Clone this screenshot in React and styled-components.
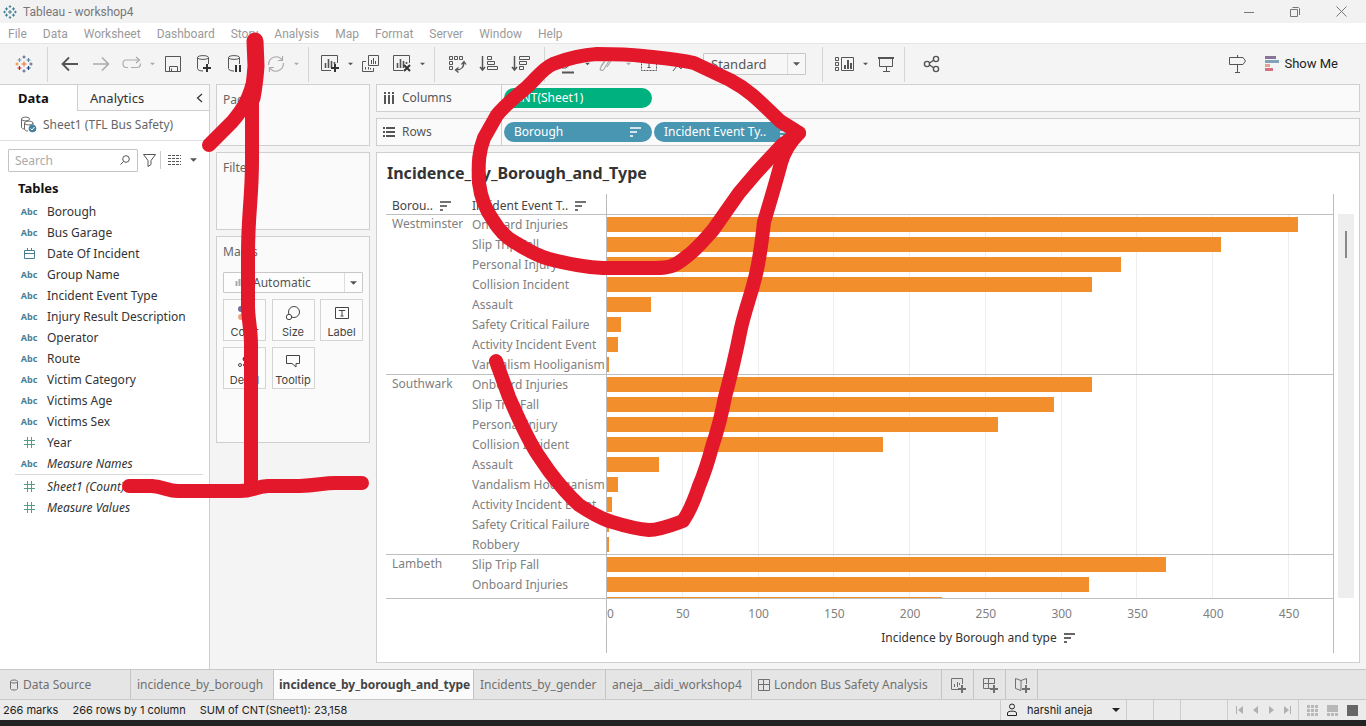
import React from "react";
import styled, { createGlobalStyle, css } from "styled-components";

const GlobalStyle = createGlobalStyle`
  *, *::before, *::after { box-sizing: border-box; }
  body {
    margin: 0;
    font-family: "Noto Sans", "Open Sans", sans-serif;
    font-size: 12px;
    line-height: 16px;
    color: #333;
    background: #f4f4f4;
  }
  button, input, select { font: inherit; color: inherit; }
  svg { display: block; flex: none; }
`;

const line = "#cfcfcf";

/* ---------- page frame ---------- */

const Page = styled.div`
  position: relative;
  display: flex;
  flex-direction: column;
  height: 100vh;
  min-height: 600px;
  overflow: hidden;
`;

const TitleBar = styled.header`
  display: flex;
  align-items: center;
  height: 23px;
  padding: 0 18px 0 3px;
  background: #f2f2f2;
  color: #777;
  font-family: Roboto, sans-serif;
`;

const AppName = styled.span`
  flex: 1;
  margin-left: 6px;
`;

const WindowButton = styled.button`
  display: grid;
  place-items: center;
  width: 14px;
  height: 22px;
  margin-left: 32px;
  padding: 0;
  border: 0;
  background: none;
  color: #777;
`;

const MenuBar = styled.nav`
  display: flex;
  align-items: center;
  gap: 16px;
  height: 20px;
  padding: 2px 8px 0;
  background: #fff;
  font-family: Roboto, sans-serif;
`;

const MenuLink = styled.a`
  color: #9a9a9a;
  text-decoration: none;
`;

const Toolbar = styled.div`
  display: flex;
  align-items: center;
  height: 41px;
  padding: 0 20px 0 8px;
  border-top: 1px solid #e6e6e6;
`;

const ToolButton = styled.button`
  display: grid;
  place-items: center;
  width: ${(p) => p.$w || 31}px;
  height: 30px;
  padding: 0;
  border: 0;
  background: none;
  color: #555;
  opacity: ${(p) => (p.$dim ? 0.45 : 1)};
`;

const Separator = styled.span`
  width: 1px;
  height: 35px;
  margin: 0 ${(p) => p.$r || 6}px 0 ${(p) => p.$l || 7}px;
  background: #d4d4d4;
`;

const ShowMe = styled.button`
  display: flex;
  align-items: center;
  gap: 5px;
  margin-left: 12px;
  padding: 0 8px 0 0;
  border: 0;
  background: none;
  color: #222;
  font-family: Roboto, sans-serif;
  font-size: 13px;
`;

const Spacer = styled.span`
  flex: 1;
`;

/* ---------- drop-downs ---------- */

const SelectBox = styled.span`
  position: relative;
  display: block;
  flex: none;
  width: ${(p) => p.$w || "100%"};
  margin-left: ${(p) => p.$ml || 0}px;
  height: ${(p) => p.$h || 22}px;
`;

const Select = styled.select`
  width: 100%;
  height: 100%;
  padding: 0 20px 0 ${(p) => p.$pl || 7}px;
  border: 1px solid #c8c8c8;
  border-radius: 1px;
  appearance: none;
  background: ${(p) => p.$bg || "#fdfdfd"};
  color: #555;
  font-size: ${(p) => p.$size || 12}px;
`;

const SelectArrow = styled.span`
  position: absolute;
  top: 1px;
  right: 1px;
  bottom: 1px;
  display: grid;
  place-items: center;
  width: 18px;
  border-left: 1px solid #ddd;
  color: #555;
  pointer-events: none;
`;

const MarkGlyph = styled.span`
  position: absolute;
  top: 6px;
  left: 12px;
  color: #aaa;
  pointer-events: none;
`;

/* ---------- workspace ---------- */

const Workspace = styled.div`
  display: flex;
  flex: 1;
  min-height: 0;
`;

const SidePane = styled.aside`
  display: flex;
  flex-direction: column;
  flex: none;
  width: 210px;
  border: 1px solid ${line};
  border-width: 1px 1px 0 0;
  background: #fff;
`;

const PaneTabs = styled.div`
  display: grid;
  grid-template-columns: 77px 1fr;
  height: 26px;
`;

const PaneTab = styled.button`
  display: flex;
  align-items: center;
  justify-content: space-between;
  padding: 0 6px 0 ${(p) => (p.$on ? 18 : 12)}px;
  border: 0 solid ${line};
  border-width: ${(p) => (p.$on ? "0" : "0 0 1px 1px")};
  background: ${(p) => (p.$on ? "#fff" : "#fafafa")};
  color: ${(p) => (p.$on ? "#111" : "#333")};
  font-size: 13px;
  font-weight: ${(p) => (p.$on ? 700 : 400)};
`;

const SourceRow = styled.div`
  display: flex;
  align-items: center;
  gap: 6px;
  height: 30px;
  padding: 0 0 2px 20px;
  border-bottom: 1px solid #e0e0e0;
  color: #666;
`;

const SearchRow = styled.div`
  display: flex;
  align-items: center;
  height: 38px;
  padding: 0 8px;
  color: #555;
`;

const SearchBox = styled.label`
  display: flex;
  align-items: center;
  width: 130px;
  height: 23px;
  padding-right: 7px;
  border: 1px solid #c4c4c4;
  border-radius: 1px;
`;

const SearchInput = styled.input`
  flex: 1;
  min-width: 0;
  padding: 2px 6px 0;
  border: 0;
  outline: 0;
  background: none;
  &::placeholder { color: #aaa; opacity: 1; }
`;

const MiniButton = styled.button`
  display: grid;
  place-items: center;
  width: ${(p) => p.$w || 22}px;
  height: 20px;
  padding: 0;
  border: 0;
  background: none;
  color: #555;
`;

const MiniRule = styled.span`
  width: 1px;
  height: 18px;
  margin-right: 2px;
  background: #ccc;
`;

const PaneTitle = styled.h2`
  margin: 0;
  padding: 0 18px 4px;
  font-size: 13px;
  line-height: 18px;
  color: #111;
`;

const FieldList = styled.ul`
  margin: 0 6px 0 15px;
  padding: 0;
  list-style: none;
  & + & {
    padding-top: 1px;
    border-top: 1px solid #d8d8d8;
  }
`;

const Field = styled.li`
  display: grid;
  grid-template-columns: 28px 1fr;
  column-gap: 4px;
  align-items: center;
  height: 21px;
  font-style: ${(p) => (p.$italic ? "italic" : "normal")};
  white-space: nowrap;
`;

const FieldIcon = styled.span`
  display: grid;
  place-items: center;
  color: ${(p) => (p.$green ? "#4f9f80" : "#4a7f93")};
  font-size: 9px;
  font-weight: 700;
  font-style: normal;
`;

const Cards = styled.section`
  display: flex;
  flex-direction: column;
  flex: none;
  gap: 6px;
  width: 154px;
  margin: 0 6px;
`;

const Card = styled.div`
  height: ${(p) => p.$h}px;
  padding: 7px 6px;
  border: 1px solid ${line};
  background: #fafafa;
`;

const CardTitle = styled.h3`
  margin: 0;
  font-size: 12px;
  font-weight: 400;
  color: #666;
`;

const MarksTools = styled.div`
  display: grid;
  grid-template-columns: repeat(3, 43px);
  justify-content: space-between;
  row-gap: 6px;
  margin-top: 6px;
`;

const MarkButton = styled.button`
  display: flex;
  flex-direction: column;
  align-items: center;
  justify-content: space-between;
  height: 42px;
  padding: 5px 0 0;
  border: 1px solid #d4d4d4;
  background: #fcfcfc;
  color: #444;
  font-family: Inter, sans-serif;
  font-size: 11px;
`;

const MarksSelectWrap = styled.div`
  margin-top: 12px;
`;

const Canvas = styled.main`
  display: flex;
  flex: 1;
  flex-direction: column;
  gap: 6px;
  min-width: 0;
  padding: 0 6px 6px 0;
`;

const Shelf = styled.div`
  display: flex;
  flex: none;
  align-items: center;
  height: 28px;
  border: 1px solid ${line};
  background: #fafafa;
`;

const ShelfLabel = styled.div`
  display: flex;
  align-items: center;
  gap: 7px;
  align-self: stretch;
  width: 125px;
  padding-left: 6px;
  border-right: 1px solid ${line};
  color: #555;
`;

const Pill = styled.button`
  display: flex;
  align-items: center;
  justify-content: space-between;
  width: 148px;
  height: 20px;
  margin-left: 2px;
  padding: 0 11px 0 10px;
  border: 0;
  border-radius: 10px;
  background: ${(p) => (p.$green ? "#00b180" : "#4996b2")};
  color: #fff;
  white-space: nowrap;
`;

/* ---------- chart ---------- */

const View = styled.section`
  display: flex;
  flex: 1;
  flex-direction: column;
  min-height: 0;
  padding: 0 5px 9px 9px;
  border: 1px solid ${line};
  background: #fff;
`;

const ViewTitle = styled.h1`
  margin: 0;
  padding: 10px 1px 11px;
  font-size: 16px;
  line-height: 20px;
  color: #333;
`;

const chartColumns = css`
  display: grid;
  grid-template-columns: 86px 134px 1fr;
`;

const ChartHeader = styled.div`
  ${chartColumns}
  flex: none;
  height: 20px;
  margin-right: 20px;
`;

const HeaderCell = styled.div`
  display: flex;
  align-items: center;
  gap: 7px;
  padding: 3px 0 0 ${(p) => p.$pl || 0}px;
  color: #444;
  white-space: nowrap;
`;

const PlotEdge = styled.div`
  border: 0 solid #bbb;
  border-width: 0 1px;
`;

const ChartScroll = styled.div`
  display: flex;
  flex: 1;
  min-height: 0;
  overflow: hidden;
`;

const ChartBody = styled.div`
  position: relative;
  flex: 1;
  min-width: 0;
  overflow: hidden;
`;

const GridLayer = styled.div`
  position: absolute;
  inset: 0 0 0 220px;
  display: grid;
  grid-template-columns: repeat(9, 50fr) 29fr;
  border: 0 solid #bbb;
  border-width: 0 1px;
`;

const GridCell = styled.span`
  border-right: 1px solid #eee;
  &:last-child { border: 0; }
`;

const Group = styled.div`
  ${chartColumns}
  position: relative;
  box-shadow: inset 0 1px 0 #bfbfbf;
`;

const GroupName = styled.div`
  padding-left: 6px;
  line-height: 20px;
  color: #808080;
`;

const RowName = styled.div`
  height: 20px;
  line-height: 22px;
  color: #808080;
  white-space: nowrap;
`;

const BarRow = styled.div`
  height: 20px;
  padding: 3px 1px 2px;
`;

const Bar = styled.div`
  height: 15px;
  background: #f28e2b;
`;

const Scrollbar = styled.div`
  flex: none;
  width: 16px;
  margin-left: 4px;
  padding: 17px 7px;
  background: #eee;
`;

const Thumb = styled.div`
  width: 2px;
  height: 27px;
  background: #888;
`;

const AxisRow = styled.div`
  display: grid;
  grid-template-columns: 220px 1fr;
  flex: none;
  height: 55px;
  margin-right: 20px;
  border-top: 1px solid #bfbfbf;
`;

const Axis = styled(PlotEdge)`
  display: flex;
  flex-direction: column;
`;

const Ticks = styled.div`
  display: grid;
  grid-template-columns: 25fr repeat(9, 50fr) 4fr;
  padding-top: 7px;
  color: #808080;
`;

const Tick = styled.span`
  min-width: 0;
  text-align: ${(p) => (p.$first ? "left" : "center")};
`;

const AxisTitle = styled.div`
  display: flex;
  align-items: center;
  justify-content: center;
  gap: 7px;
  padding: 8px 0 0 16px;
`;

/* ---------- bottom bars ---------- */

const SheetTabs = styled.div`
  display: flex;
  flex: none;
  height: 31px;
  border: 1px solid #c8c8c8;
  border-width: 1px 0;
  background: #e5e5e5;
`;

const SheetTab = styled.button`
  display: flex;
  align-items: center;
  gap: 4px;
  flex: none;
  width: ${(p) => p.$w}px;
  padding: 0 5px 0 ${(p) => p.$pl || 6}px;
  border: 0;
  border-right: 1px solid #c4c4c4;
  background: ${(p) => (p.$on ? "#fbfbfb" : "transparent")};
  color: ${(p) => (p.$on ? "#444" : "#707070")};
  font-weight: ${(p) => (p.$on ? 700 : 400)};
  white-space: nowrap;
`;

const StatusBar = styled.footer`
  display: flex;
  flex: none;
  height: 20px;
  background: #ebebeb;
  font-family: Inter, sans-serif;
  font-size: 11px;
  color: #222;
`;

const StatusText = styled.span`
  padding: 2px 11px 0 3px;
`;

const StatusCell = styled.div`
  display: flex;
  align-items: center;
  width: ${(p) => p.$w}px;
  padding: 0 ${(p) => p.$p || 0}px;
  border-left: 1px solid #ccc;
`;

const UserButton = styled.button`
  display: flex;
  align-items: center;
  gap: 10px;
  width: 100%;
  padding: 0;
  border: 0;
  background: none;
  white-space: nowrap;
`;

const StatusButton = styled.button`
  display: grid;
  place-items: center;
  width: ${(p) => p.$w}px;
  padding: 0;
  border: 0;
  background: none;
  color: ${(p) => p.$c || "#b0b0b0"};
`;

const TaskbarEdge = styled.div`
  flex: none;
  height: 6px;
  background: #222;
`;

const Ink = styled.svg`
  position: absolute;
  top: 0;
  left: 0;
  pointer-events: none;
`;

/* ---------- icons ---------- */

const Icon = ({ w = 20, h = 20, children, sw = 1 }) => (
  <svg width={w} height={h} viewBox={`0 0 ${w} ${h}`} fill="none" stroke="currentColor" strokeWidth={sw} aria-hidden="true">
    {children}
  </svg>
);

const Caret = ({ w = 7 }) => (
  <svg width={w} height="4" viewBox="0 0 8 4" fill="currentColor" aria-hidden="true">
    <path d="M0 0H8L4 4Z" />
  </svg>
);

const SortIcon = () => (
  <Icon w={11} h={10}>
    <path d="M0 1H11M0 5H7M0 9H3" strokeWidth="1.5" />
  </Icon>
);

const Cross = ({ x, y, r, c }) => (
  <path d={`M${x - r} ${y}H${x + r}M${x} ${y - r}V${y + r}`} stroke={c} />
);

const TableauLogo = ({ size = 18, mono }) => (
  <svg width={size} height={size} viewBox="0 0 18 18" fill="none" strokeWidth="1.2" aria-hidden="true">
    <Cross x={9} y={9} r={2.6} c={mono || "#e8762d"} />
    <Cross x={4.5} y={5} r={2} c={mono || "#7a9aa8"} />
    <Cross x={13.5} y={5} r={2} c={mono || "#59879b"} />
    <Cross x={4.5} y={13} r={2} c={mono || "#c72035"} />
    <Cross x={13.5} y={13} r={2} c={mono || "#1f447e"} />
    <Cross x={9} y={2} r={1.6} c={mono || "#5c6692"} />
    <Cross x={9} y={16} r={1.6} c={mono || "#5c6692"} />
    <Cross x={2} y={9} r={1.6} c={mono || "#eb912c"} />
    <Cross x={16} y={9} r={1.6} c={mono || "#5c6692"} />
  </svg>
);

const PlusBadge = ({ x, y }) => <path d={`M${x - 4} ${y}H${x + 4}M${x} ${y - 4}V${y + 4}`} stroke="#333" strokeWidth="2" />;

const Cylinder = () => (
  <path d="M3.5 3.5V14.5C3.5 16 6 17 9 17M14.5 3.5V10M3.5 3.5C3.5 1 14.5 1 14.5 3.5S3.5 6 3.5 3.5Z" />
);

const ChartBox = () => (
  <>
    <path d="M17.5 9V1.5H1.5V16.5H11" />
    <path d="M5.5 14V9M8.5 14V5M11.5 14V7M14.5 10V8" strokeWidth="1.6" />
  </>
);

const ToolCaret = ({ label, dim }) => (
  <ToolButton $w={10} $dim={dim} aria-label={label}>
    <Caret w={5} />
  </ToolButton>
);

/* ---------- data ---------- */

const menus = ["File", "Data", "Worksheet", "Dashboard", "Story", "Analysis", "Map", "Format", "Server", "Window", "Help"];

const dimensions = [
  ["abc", "Borough"],
  ["abc", "Bus Garage"],
  ["date", "Date Of Incident"],
  ["abc", "Group Name"],
  ["abc", "Incident Event Type"],
  ["abc", "Injury Result Description"],
  ["abc", "Operator"],
  ["abc", "Route"],
  ["abc", "Victim Category"],
  ["abc", "Victims Age"],
  ["abc", "Victims Sex"],
  ["num", "Year"],
  ["abc", "Measure Names", true],
];

const measures = [
  ["num", "Sheet1 (Count)", true],
  ["num", "Measure Values", true],
];

const axisMax = 479;

const groups = [
  {
    name: "Westminster",
    rows: [
      ["Onboard Injuries", 456],
      ["Slip Trip Fall", 405],
      ["Personal Injury", 339],
      ["Collision Incident", 320],
      ["Assault", 29],
      ["Safety Critical Failure", 9],
      ["Activity Incident Event", 7],
      ["Vandalism Hooliganism", 1],
    ],
  },
  {
    name: "Southwark",
    rows: [
      ["Onboard Injuries", 320],
      ["Slip Trip Fall", 295],
      ["Personal Injury", 258],
      ["Collision Incident", 182],
      ["Assault", 34],
      ["Vandalism Hooliganism", 7],
      ["Activity Incident Event", 3],
      ["Safety Critical Failure", 1],
      ["Robbery", 1],
    ],
  },
  {
    name: "Lambeth",
    rows: [
      ["Slip Trip Fall", 369],
      ["Onboard Injuries", 318],
      ["", 221],
    ],
  },
];

const ticks = [0, 50, 100, 150, 200, 250, 300, 350, 400, 450];

/* ---------- parts ---------- */

const FieldGlyph = ({ kind }) => {
  if (kind === "abc") return "Abc";
  if (kind === "date")
    return (
      <Icon w={11} h={11}>
        <path d="M0.5 2.5H10.5V10.5H0.5ZM0.5 5.5H10.5M3.5 0V3M7.5 0V3" />
      </Icon>
    );
  return (
    <Icon w={11} h={11}>
      <path d="M3.5 0V11M7.5 0V11M0 3.5H11M0 7.5H11" />
    </Icon>
  );
};

const Fields = ({ items }) => (
  <FieldList>
    {items.map(([kind, name, italic]) => (
      <Field key={name} $italic={italic}>
        <FieldIcon $green={kind === "num"}>
          <FieldGlyph kind={kind} />
        </FieldIcon>
        {name}
      </Field>
    ))}
  </FieldList>
);

const TopToolbar = () => (
  <Toolbar>
    <ToolButton aria-label="Start page"><TableauLogo /></ToolButton>
    <Separator $l={8} />
    <ToolButton aria-label="Undo">
      <Icon sw={1.8}><path d="M18 10H3M9 3.5L2.5 10L9 16.5" /></Icon>
    </ToolButton>
    <ToolButton $dim aria-label="Redo">
      <Icon sw={1.6}><path d="M2 10H17M11 3.5L17.5 10L11 16.5" /></Icon>
    </ToolButton>
    <ToolButton $dim aria-label="Replay">
      <Icon sw={1.2}><path d="M6 13.5H4C0 13.5 0 6 4 6H17M14 3L17.5 6L14 9M9 13.5H15C17 13.5 18.5 12 18.5 9.5" /></Icon>
    </ToolButton>
    <ToolCaret dim label="Replay options" />
    <ToolButton aria-label="Save">
      <Icon><path d="M2.5 2.5H17.5V17.5H2.5ZM6.5 17V12.5H14.5V17M8.5 17V14.5" /></Icon>
    </ToolButton>
    <ToolButton aria-label="New data source">
      <Icon><Cylinder /><PlusBadge x={13} y={14} /></Icon>
    </ToolButton>
    <ToolButton aria-label="Pause auto updates">
      <Icon><Cylinder /><path d="M11 11V18M15 11V18" stroke="#333" strokeWidth="2" /></Icon>
    </ToolButton>
    <ToolCaret label="Update options" />
    <ToolButton $dim aria-label="Run update">
      <Icon sw={1.2}><path d="M2.5 11C2.5 3 12 0 16 6M17.5 9C17.5 17 8 20 4 14M16.5 2V6.5H12M3.5 18V13.5H8" /></Icon>
    </ToolButton>
    <ToolCaret dim label="Run options" />
    <Separator $r={5} />
    <ToolButton aria-label="New worksheet">
      <Icon><ChartBox /><PlusBadge x={15} y={14} /></Icon>
    </ToolButton>
    <ToolCaret label="New sheet options" />
    <ToolButton aria-label="Duplicate">
      <Icon>
        <path d="M7.5 1.5H17.5V11.5H7.5ZM5 7.5H1.5V17.5H12.5V14" />
        <path d="M10.5 10V6M12.5 10V4M14.5 10V7M4.5 15.5V13M7.5 15.5V13M9.5 15.5V14" />
      </Icon>
    </ToolButton>
    <ToolButton aria-label="Clear sheet">
      <Icon><ChartBox /><path d="M12 11L18 17M18 11L12 17" stroke="#333" strokeWidth="2" /></Icon>
    </ToolButton>
    <ToolCaret label="Clear options" />
    <Separator />
    <ToolButton $w={32} aria-label="Swap rows and columns">
      <Icon>
        <path d="M2.5 2.5H5.5V5.5H2.5ZM7.5 2.5H10.5V5.5H7.5ZM12.5 2.5H15.5V5.5H12.5ZM2.5 7.5H5.5V10.5H2.5ZM2.5 12.5H5.5V15.5H2.5Z" />
        <path d="M17 8C17 13 14 16 9 16M14.5 10.5L17 7.5L19 10.5M11.5 13.5L8.5 16L11.5 18.5" strokeWidth="1.3" />
      </Icon>
    </ToolButton>
    <ToolButton $w={32} aria-label="Sort ascending">
      <Icon>
        <path d="M3.5 2V16M1 13L3.5 16L6 13" strokeWidth="1.5" />
        <path d="M8.5 2.5H12.5V5.5H8.5ZM8.5 7.5H15.5V10.5H8.5ZM8.5 12.5H18.5V15.5H8.5Z" />
      </Icon>
    </ToolButton>
    <ToolButton $w={32} aria-label="Sort descending">
      <Icon>
        <path d="M3.5 2V16M1 13L3.5 16L6 13" strokeWidth="1.5" />
        <path d="M8.5 2.5H18.5V5.5H8.5ZM8.5 7.5H15.5V10.5H8.5ZM8.5 12.5H12.5V15.5H8.5Z" />
      </Icon>
    </ToolButton>
    <Separator />
    <ToolButton aria-label="Highlight">
      <Icon><path d="M5 18.5H17" strokeWidth="2" /><path d="M5 14L14 4L17 7L9 14Z" /></Icon>
    </ToolButton>
    <ToolCaret label="Highlight options" />
    <ToolButton $dim aria-label="Group members">
      <Icon sw={1.2}><path d="M3 12L8 5C10 2 13 4 11 7L6 15C4 18 1 16 3 13L7 7M9 13L13 7" /></Icon>
    </ToolButton>
    <ToolCaret dim label="Group options" />
    <ToolButton aria-label="Show mark labels">
      <Icon><path d="M2.5 3.5H17.5V16.5H2.5Z" strokeDasharray="2 1" /><path d="M7 7.5H13M10 7V13.5M8.5 13.5H11.5" /></Icon>
    </ToolButton>
    <ToolButton aria-label="Fix axes">
      <Icon><path d="M3 17L7 12M5 9L11 15L12 11L16 7L13 4L9 8Z" /></Icon>
    </ToolButton>
    <SelectBox $w="103px" $ml={8}>
      <Select aria-label="Fit" $size={13} $bg="#f7f7f7"><option>Standard</option></Select>
      <SelectArrow><Caret /></SelectArrow>
    </SelectBox>
    <Separator $l={16} />
    <ToolButton aria-label="Show or hide cards">
      <Icon w={21}>
        <path d="M1.5 3.5H4.5V6.5H1.5ZM1.5 8.5H4.5V11.5H1.5ZM1.5 13.5H4.5V16.5H1.5ZM7.5 3.5H19.5V16.5H7.5Z" />
        <path d="M11 15V11M14 15V6M17 15V9" strokeWidth="2" />
      </Icon>
    </ToolButton>
    <ToolCaret label="Card options" />
    <ToolButton aria-label="Presentation mode">
      <Icon><path d="M2 4H18" strokeWidth="2" /><path d="M3.5 4V12.5H16.5V4M10.5 12V17M7 17.5H14" /></Icon>
    </ToolButton>
    <Separator $l={3} $r={11} />
    <ToolButton aria-label="Share">
      <Icon sw={1.4}>
        <circle cx="5" cy="10" r="2.6" /><circle cx="14" cy="5" r="2.6" /><circle cx="14" cy="15" r="2.6" />
        <path d="M7.5 9L12 6M7.5 11L12 14" />
      </Icon>
    </ToolButton>
    <Spacer />
    <ToolButton aria-label="Guide me">
      <Icon><path d="M2.5 3.5H16L18.5 7L16 10.5H2.5ZM10.5 1V3M10.5 10.5V18M8 18.5H13" /></Icon>
    </ToolButton>
    <ShowMe>
      <svg width="15" height="16" viewBox="0 0 15 16" aria-hidden="true">
        <path d="M1 0H12V3H1Z" fill="#86749b" /><path d="M1 4H15V7H1Z" fill="#82a2b8" />
        <path d="M1 8H6V11H1Z" fill="#e0a58e" /><path d="M1 12H9V15H1Z" fill="#d77182" />
      </svg>
      Show Me
    </ShowMe>
  </Toolbar>
);

const DataPane = () => (
  <SidePane>
    <PaneTabs>
      <PaneTab $on>Data</PaneTab>
      <PaneTab>
        Analytics
        <Icon w={7} h={10} sw={1.2}><path d="M6 1L1.5 5L6 9" /></Icon>
      </PaneTab>
    </PaneTabs>
    <SourceRow>
      <Icon w={17} h={17}>
        <path d="M1.5 3V11C1.5 12 3 13 4 13M1.5 3C1.5 0.5 9.5 0.5 9.5 3S1.5 5.5 1.5 3ZM4.5 7V13C4.5 14 6 15 8 15M4.5 7C4.5 4.5 13 4.5 13 7S4.5 9.5 4.5 7ZM13 7V9" />
        <circle cx="12.5" cy="12.5" r="3.8" fill="#4481a0" stroke="none" />
        <path d="M10.5 12.5L12 14L14.5 11" stroke="#fff" />
      </Icon>
      Sheet1 (TFL Bus Safety)
    </SourceRow>
    <SearchRow>
      <SearchBox>
        <SearchInput placeholder="Search" aria-label="Search" />
        <Icon w={10} h={10}><circle cx="6" cy="4" r="3.3" /><path d="M3.5 6.5L0.5 9.5" /></Icon>
      </SearchBox>
      <MiniButton aria-label="Filter fields">
        <Icon w={13} h={13}><path d="M0.5 0.5H12.5L8 6.5V10.5L5 12.5V6.5Z" /></Icon>
      </MiniButton>
      <MiniRule />
      <MiniButton aria-label="View as list">
        <Icon w={13} h={10}>
          <path d="M0 0.5H13M0 3.5H13M0 6.5H13M0 9.5H13" strokeDasharray="3 1" />
        </Icon>
      </MiniButton>
      <MiniButton $w={16} aria-label="View options"><Caret /></MiniButton>
    </SearchRow>
    <PaneTitle>Tables</PaneTitle>
    <Fields items={dimensions} />
    <Fields items={measures} />
  </SidePane>
);

const MarksPane = () => (
  <Cards>
    <Card $h={62}><CardTitle>Pages</CardTitle></Card>
    <Card $h={78}><CardTitle>Filters</CardTitle></Card>
    <Card $h={207}>
      <CardTitle>Marks</CardTitle>
      <MarksSelectWrap>
        <SelectBox $h={21}>
          <Select aria-label="Mark type" $pl={29}><option>Automatic</option></Select>
          <MarkGlyph><Icon w={12} h={9}><path d="M1.5 3V8M4.5 1V8M7.5 4V8M10.5 2V8" strokeWidth="2" /></Icon></MarkGlyph>
          <SelectArrow><Caret /></SelectArrow>
        </SelectBox>
      </MarksSelectWrap>
      <MarksTools>
        <MarkButton>
          <svg width="16" height="16" viewBox="0 0 16 16" aria-hidden="true">
            <circle cx="4" cy="4" r="3" fill="#7b6a9a" /><circle cx="12" cy="4" r="3" fill="#4e9fb8" />
            <circle cx="4" cy="12" r="3" fill="#f0a582" /><circle cx="12" cy="12" r="3" fill="#d77182" />
          </svg>
          Color
        </MarkButton>
        <MarkButton>
          <Icon w={16} h={16}><circle cx="9" cy="7" r="5.5" /><circle cx="4" cy="12" r="2.7" fill="#fcfcfc" /></Icon>
          Size
        </MarkButton>
        <MarkButton>
          <Icon w={14} h={16}><path d="M0.5 2.5H13.5V13.5H0.5ZM4 6V5.5H10V6M7 5.5V11M5.5 11H8.5" /></Icon>
          Label
        </MarkButton>
        <MarkButton>
          <Icon w={16} h={16}>
            <circle cx="8" cy="6" r="2" fill="currentColor" /><circle cx="3" cy="12" r="1.5" /><circle cx="8" cy="12" r="1.5" /><circle cx="13" cy="12" r="1.5" />
          </Icon>
          Detail
        </MarkButton>
        <MarkButton>
          <Icon w={16} h={16}><path d="M1.5 2.5H14.5V10.5H11V14L7 10.5H1.5Z" /></Icon>
          Tooltip
        </MarkButton>
      </MarksTools>
    </Card>
  </Cards>
);

const BarChart = () => (
  <View>
    <ViewTitle>Incidence_By_Borough_and_Type</ViewTitle>
    <ChartHeader>
      <HeaderCell $pl={6}>Borou.. <SortIcon /></HeaderCell>
      <HeaderCell>Incident Event T.. <SortIcon /></HeaderCell>
      <PlotEdge />
    </ChartHeader>
    <ChartScroll>
      <ChartBody>
        <GridLayer>
          {ticks.map((t) => <GridCell key={t} />)}
        </GridLayer>
        {groups.map((g) => (
          <Group key={g.name}>
            <GroupName>{g.name}</GroupName>
            <div>
              {g.rows.map(([name]) => <RowName key={name}>{name}</RowName>)}
            </div>
            <div>
              {g.rows.map(([name, value]) => (
                <BarRow key={name}>
                  <Bar style={{ width: `${(value / axisMax) * 100}%` }} />
                </BarRow>
              ))}
            </div>
          </Group>
        ))}
      </ChartBody>
      <Scrollbar><Thumb /></Scrollbar>
    </ChartScroll>
    <AxisRow>
      <span />
      <Axis>
        <Ticks>
          {ticks.map((t) => <Tick key={t} $first={t === 0}>{t}</Tick>)}
        </Ticks>
        <AxisTitle>Incidence by Borough and type <SortIcon /></AxisTitle>
      </Axis>
    </AxisRow>
  </View>
);

const DashboardGlyph = () => (
  <Icon w={12} h={12}><path d="M0.5 0.5H11.5V11.5H0.5ZM5.5 0.5V11.5M0.5 5.5H11.5" /></Icon>
);

const BottomTabs = () => (
  <SheetTabs>
    <SheetTab $w={131} $pl={9}>
      <Icon w={10} h={12}><path d="M1.5 2.5V9.5C1.5 11.5 8.5 11.5 8.5 9.5V2.5C8.5 0.5 1.5 0.5 1.5 2.5C1.5 4.5 8.5 4.5 8.5 2.5" /></Icon>
      Data Source
    </SheetTab>
    <SheetTab $w={143}>incidence_by_borough</SheetTab>
    <SheetTab $w={200} $on $pl={5}>incidence_by_borough_and_type</SheetTab>
    <SheetTab $w={132}>Incidents_by_gender</SheetTab>
    <SheetTab $w={146}>aneja__aidi_workshop4</SheetTab>
    <SheetTab $w={190}><DashboardGlyph />London Bus Safety Analysis</SheetTab>
    <SheetTab $w={32} $pl={9} aria-label="New worksheet">
      <Icon w={16} h={16}>
        <path d="M11.5 7V1.5H0.5V12.5H7M3.5 10V7M6.5 10V5M8.5 8V6" />
        <path d="M7 12H15M11 8V16" strokeWidth="2" />
      </Icon>
    </SheetTab>
    <SheetTab $w={32} $pl={9} aria-label="New dashboard">
      <Icon w={16} h={16}>
        <path d="M11.5 7V1.5H0.5V11.5H7M5.5 1.5V11.5M0.5 6.5H11.5" />
        <path d="M7 12H15M11 8V16" strokeWidth="2" />
      </Icon>
    </SheetTab>
    <SheetTab $w={32} $pl={9} aria-label="New story">
      <Icon w={16} h={16}>
        <path d="M11.5 7V1.5L6 3.5L0.5 1.5V11.5L6 13.5V3.5" />
        <path d="M7 12H15M11 8V16" strokeWidth="2" />
      </Icon>
    </SheetTab>
  </SheetTabs>
);

const Status = () => (
  <StatusBar>
    <StatusText>266 marks</StatusText>
    <StatusText>266 rows by 1 column</StatusText>
    <StatusText>SUM of CNT(Sheet1): 23,158</StatusText>
    <Spacer />
    <StatusCell $w={126} $p={6}>
      <UserButton>
        <Icon w={10} h={14}><circle cx="5" cy="3.5" r="2.5" /><path d="M0.5 12.5V10C0.5 7.5 9.5 7.5 9.5 10V12.5Z" /></Icon>
        harshil aneja
        <Spacer />
        <Caret w={8} />
      </UserButton>
    </StatusCell>
    <StatusCell $w={27} />
    <StatusCell $w={27} />
    <StatusCell $w={47} />
    <StatusCell $w={71} $p={3}>
      <StatusButton $w={16} aria-label="First sheet"><Icon w={7} h={8}><path d="M0.5 0V8" /><path d="M7 0V8L2 4Z" fill="currentColor" stroke="none" /></Icon></StatusButton>
      <StatusButton $w={16} aria-label="Previous sheet"><Icon w={5} h={8}><path d="M5 0V8L0 4Z" fill="currentColor" stroke="none" /></Icon></StatusButton>
      <StatusButton $w={16} aria-label="Next sheet"><Icon w={5} h={8}><path d="M0 0V8L5 4Z" fill="currentColor" stroke="none" /></Icon></StatusButton>
      <StatusButton $w={16} aria-label="Last sheet"><Icon w={7} h={8}><path d="M6.5 0V8" /><path d="M0 0V8L5 4Z" fill="currentColor" stroke="none" /></Icon></StatusButton>
    </StatusCell>
    <StatusCell $w={68} $p={3}>
      <StatusButton $w={21} $c="#b8b8b8" aria-label="Sheet sorter">
        <Icon w={11} h={11} sw={3}><path d="M0 1.5H11M0 5.5H11M0 9.5H11" strokeDasharray="3 1" /></Icon>
      </StatusButton>
      <StatusButton $w={21} $c="#b8b8b8" aria-label="Filmstrip">
        <Icon w={11} h={11}><path d="M0 0H11V7H0Z" fill="currentColor" stroke="none" /><path d="M0 9.5H11" strokeWidth="3" strokeDasharray="3 1" /></Icon>
      </StatusButton>
      <StatusButton $w={21} $c="#666" aria-label="Show tabs">
        <Icon w={11} h={11}><path d="M0 0H11V11H0Z" fill="currentColor" stroke="none" /></Icon>
      </StatusButton>
    </StatusCell>
  </StatusBar>
);

const PenMarks = () => (
  <Ink width="1366" height="726" viewBox="0 0 1366 726" fill="none" stroke="#e4182b" strokeWidth="14" strokeLinecap="round" strokeLinejoin="round" aria-hidden="true">
    <path d="M255 41L256 66C255 80 254 88 252 98" strokeWidth="17" />
    <path d="M255 76C249 98 245 107 232 122L209 145" />
    <path d="M252 90V160C252 200 248 212 248 255V305C248 320 251 328 251 345V485" />
    <path d="M129 486H152C164 487 168 491 178 491H240C253 491 254 487 268 486H300C318 485 324 483 335 483H362" />
    <path d="M799 133L780 121C763 105 751 91 730 80L694 63C677 59 662 58 643 56C627 54 612 54 597 54C580 55 566 59 553 64C542 69 536 79 527 87C514 98 506 104 497 115L484 138C479 151 478 162 479 183C481 199 485 209 493 220C499 230 506 238 516 243C527 250 538 256 549 259C568 264 584 267 603 268H655C670 268 675 266 686 257C697 249 704 240 713 230L739 193L756 173L782 145L799 133" />
    <path d="M799 133C790 142 784 152 781 163C776 182 770 202 764 222C762 240 760 257 756 274C752 292 745 310 741 328C736 353 731 375 725 397C721 418 717 432 712 447C708 462 704 474 699 486C694 501 690 511 683 521C672 525 660 530 649 530C634 529 622 525 609 521C597 517 588 511 579 505C568 495 558 483 549 471L538 455C526 437 518 417 509 397L496 361" />
  </Ink>
);

export default function App() {
  return (
    <Page>
      <GlobalStyle />
      <TitleBar>
        <TableauLogo size={14} mono="#34768a" />
        <AppName>Tableau - workshop4</AppName>
        <WindowButton aria-label="Minimize"><Icon w={10} h={10}><path d="M0 5.5H10" /></Icon></WindowButton>
        <WindowButton aria-label="Restore"><Icon w={10} h={10}><path d="M0.5 2.5H7.5V9.5H0.5ZM2.5 0.5H8.5L9.5 1.5V8" /></Icon></WindowButton>
        <WindowButton aria-label="Close"><Icon w={11} h={11}><path d="M0.5 0.5L10.5 10.5M10.5 0.5L0.5 10.5" /></Icon></WindowButton>
      </TitleBar>
      <MenuBar>
        {menus.map((m) => <MenuLink key={m} href={`#${m.toLowerCase()}`}>{m}</MenuLink>)}
      </MenuBar>
      <TopToolbar />
      <Workspace>
        <DataPane />
        <MarksPane />
        <Canvas>
          <Shelf>
            <ShelfLabel>
              <Icon w={12} h={12} sw={2}><path d="M2 0V2M6 0V2M10 0V2M2 3V12M6 3V12M10 3V12" /></Icon>
              Columns
            </ShelfLabel>
            <Pill $green>CNT(Sheet1)</Pill>
          </Shelf>
          <Shelf>
            <ShelfLabel>
              <Icon w={12} h={12} sw={2}><path d="M0 2H2M0 6H2M0 10H2M3 2H12M3 6H12M3 10H12" /></Icon>
              Rows
            </ShelfLabel>
            <Pill>Borough <SortIcon /></Pill>
            <Pill>Incident Event Ty.. <SortIcon /></Pill>
          </Shelf>
          <BarChart />
        </Canvas>
      </Workspace>
      <BottomTabs />
      <Status />
      <TaskbarEdge />
      <PenMarks />
    </Page>
  );
}
